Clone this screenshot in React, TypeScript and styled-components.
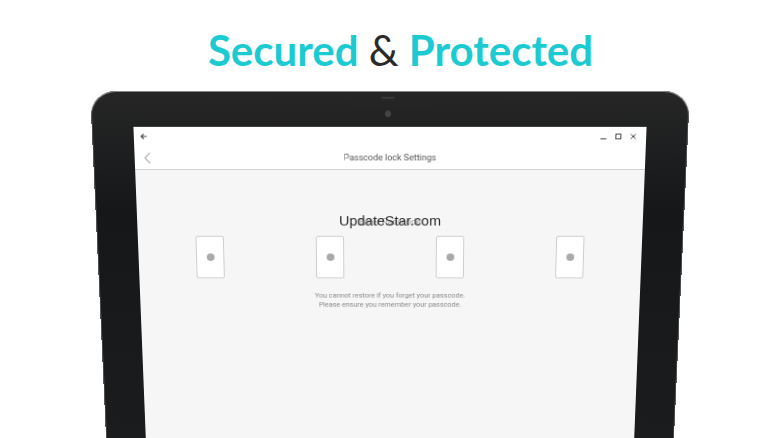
import styled, { createGlobalStyle } from 'styled-components';

const GlobalStyle = createGlobalStyle`
  html, body {
    margin: 0;
    padding: 0;
    background: #ffffff;
    overflow: hidden;
  }
  body {
    font-family: Roboto, "Liberation Sans", sans-serif;
  }
`;

const Page = styled.div`
  width: 779px;
  height: 438px;
  overflow: hidden;
  display: flex;
  flex-direction: column;
  align-items: center;
`;

const Headline = styled.h1`
  margin: 0;
  flex-shrink: 0;
  height: 91px;
  padding: 25px 0 0 22px;
  box-sizing: border-box;
  font-family: Lato, "Noto Sans", sans-serif;
  font-size: 42px;
  line-height: 50px;
  font-weight: 700;
  letter-spacing: 0;
  color: #1ccbd2;
`;

const Amp = styled.span`
  color: #2b2b2b;
  font-weight: 400;
`;

const Tablet = styled.div`
  width: 600px;
  height: 420px;
  flex-shrink: 0;
  box-sizing: border-box;
  padding: 37px 42px 0;
  border-radius: 26px 26px 0 0;
  background: linear-gradient(180deg, #262626 0%, #151719 30%, #1c1d1f 100%);
  box-shadow: inset 0 1px 0 #8a8a8a, inset 1px 0 0 #555, inset -1px 0 0 #555;
  transform-origin: 50% 0;
  transform: perspective(1500px) rotateX(-13deg);
  position: relative;
`;

const Speaker = styled.div`
  position: absolute;
  top: 6px;
  left: 50%;
  margin-left: -9px;
  width: 14px;
  height: 2px;
  border-radius: 1px;
  background: #3a3a3a;
`;

const Camera = styled.div`
  position: absolute;
  top: 20px;
  left: 50%;
  margin-left: -5px;
  width: 6px;
  height: 7px;
  border-radius: 50%;
  background: #444;
`;

const Screen = styled.div`
  height: 100%;
  background: #f6f6f6;
  display: flex;
  flex-direction: column;
`;

const TitleBar = styled.div`
  height: 20px;
  background: #ffffff;
  display: flex;
  align-items: center;
  padding: 0 6px;
  color: #444;
`;

const Spacer = styled.div`
  flex: 1;
`;

const WinButton = styled.div`
  width: 15px;
  height: 20px;
  display: flex;
  align-items: center;
  justify-content: center;
`;

const Header = styled.div`
  height: 24px;
  background: #ffffff;
  border-bottom: 1px solid #cfcfcf;
  display: flex;
  align-items: center;
  position: relative;
  justify-content: center;
`;

const BackChevron = styled.div`
  position: absolute;
  left: 9px;
  top: 6px;
  display: flex;
`;

const HeaderTitle = styled.div`
  font-size: 9px;
  color: #555;
`;

const Content = styled.div`
  display: flex;
  flex-direction: column;
  align-items: center;
  padding-top: 44px;
`;

const PromptArea = styled.div`
  position: relative;
  height: 22px;
  display: flex;
  align-items: center;
  justify-content: center;
`;

const Prompt = styled.div`
  font-size: 9px;
  color: #a0a0a0;
`;

const Watermark = styled.div`
  position: absolute;
  left: 50%;
  top: 50%;
  transform: translate(-50%, -58%);
  white-space: nowrap;
  font-family: "Liberation Sans", sans-serif;
  font-size: 14.5px;
  color: #2a2a2a;
`;

const Slots = styled.div`
  margin-top: 4px;
  display: grid;
  grid-template-columns: repeat(4, 123px);
  justify-items: center;
`;

const Slot = styled.div`
  width: 29px;
  height: 46px;
  box-sizing: border-box;
  background: #ffffff;
  border: 1px solid #cdcdcd;
  border-radius: 2px;
  display: flex;
  align-items: center;
  justify-content: center;
`;

const Dot = styled.div`
  width: 8px;
  height: 8px;
  border-radius: 50%;
  background: #a9a9a9;
`;

const Notice = styled.div`
  margin-top: 14px;
  font-size: 7.4px;
  line-height: 10px;
  color: #8a8a8a;
  text-align: center;
`;

export default function App() {
  return (
    <Page>
      <GlobalStyle />
      <Headline>
        Secured <Amp>&amp;</Amp> Protected
      </Headline>
      <Tablet>
        <Speaker />
        <Camera />
        <Screen>
          <TitleBar>
            <svg width="8" height="8" viewBox="0 0 8 8">
              <path d="M7 4H1.5M4 1.3L1.3 4L4 6.7" stroke="#444" strokeWidth="1.1" fill="none" />
            </svg>
            <Spacer />
            <WinButton>
              <svg width="8" height="8" viewBox="0 0 8 8">
                <path d="M1 6.5H7" stroke="#444" strokeWidth="1" />
              </svg>
            </WinButton>
            <WinButton>
              <svg width="8" height="8" viewBox="0 0 8 8">
                <rect x="1.5" y="1.5" width="5" height="5" stroke="#444" strokeWidth="1" fill="none" />
              </svg>
            </WinButton>
            <WinButton>
              <svg width="8" height="8" viewBox="0 0 8 8">
                <path d="M1.5 1.5L6.5 6.5M6.5 1.5L1.5 6.5" stroke="#444" strokeWidth="1" />
              </svg>
            </WinButton>
          </TitleBar>
          <Header>
            <BackChevron>
              <svg width="8" height="13" viewBox="0 0 8 13">
                <path d="M6.5 1L1.5 6.5L6.5 12" stroke="#999" strokeWidth="1.1" fill="none" />
              </svg>
            </BackChevron>
            <HeaderTitle>Passcode lock Settings</HeaderTitle>
          </Header>
          <Content>
            <PromptArea>
              <Prompt>Enter Passcode</Prompt>
              <Watermark>UpdateStar.com</Watermark>
            </PromptArea>
            <Slots>
              {[0, 1, 2, 3].map((i) => (
                <Slot key={i}>
                  <Dot />
                </Slot>
              ))}
            </Slots>
            <Notice>
              You cannot restore if you forget your passcode.
              <br />
              Please ensure you remember your passcode.
            </Notice>
          </Content>
        </Screen>
      </Tablet>
    </Page>
  );
}
